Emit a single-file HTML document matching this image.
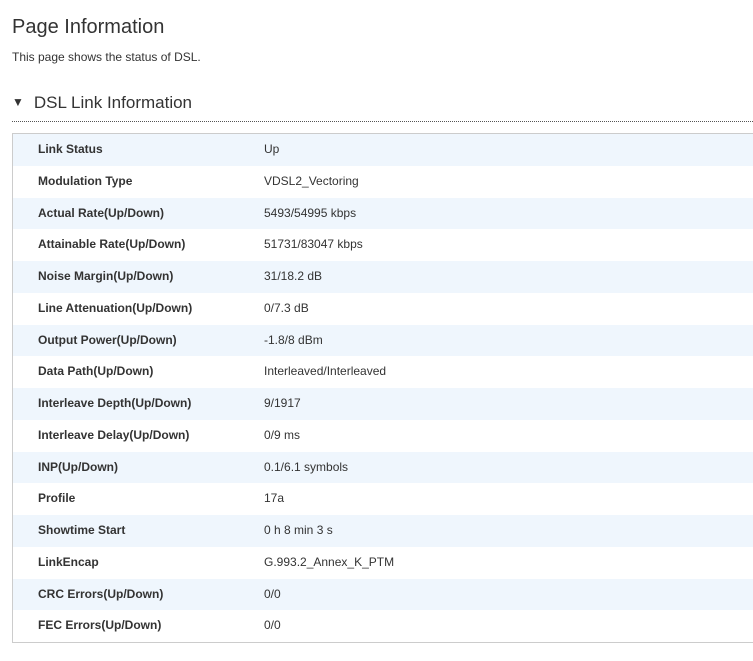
<!DOCTYPE html>
<html><head><meta charset="utf-8"><style>
body{margin:0;background:#fff;font-family:"Liberation Sans",sans-serif;color:#333;width:753px;height:661px;overflow:hidden;position:relative}
.t{position:absolute;left:12px;top:16px;font-size:20px;color:#333}
.s{position:absolute;left:12px;top:50px;font-size:12px;color:#333}
.h{position:absolute;left:12px;top:93px;font-size:17px;color:#333}
.h span{font-size:12px;margin-right:10px;position:relative;top:-2px}
.d{position:absolute;left:12px;right:0;top:121px;border-top:1px dotted #555}
.box{position:absolute;left:12px;top:133px;width:745px;height:508px;border:1px solid #ccc;border-right:none}
.r{height:31.75px;line-height:31.75px;font-size:12px;position:relative}
.r:nth-child(odd){background:#eff6fd}
.r b{position:absolute;left:25px;font-weight:bold;color:#333}
.r i{position:absolute;left:251px;font-style:normal;color:#333}
</style></head><body>
<div class="t">Page Information</div>
<div class="s">This page shows the status of DSL.</div>
<div class="h"><span>▼</span>DSL Link Information</div>
<div class="d"></div>
<div class="box">
<div class="r"><b>Link Status</b><i>Up</i></div>
<div class="r"><b>Modulation Type</b><i>VDSL2_Vectoring</i></div>
<div class="r"><b>Actual Rate(Up/Down)</b><i>5493/54995 kbps</i></div>
<div class="r"><b>Attainable Rate(Up/Down)</b><i>51731/83047 kbps</i></div>
<div class="r"><b>Noise Margin(Up/Down)</b><i>31/18.2 dB</i></div>
<div class="r"><b>Line Attenuation(Up/Down)</b><i>0/7.3 dB</i></div>
<div class="r"><b>Output Power(Up/Down)</b><i>-1.8/8 dBm</i></div>
<div class="r"><b>Data Path(Up/Down)</b><i>Interleaved/Interleaved</i></div>
<div class="r"><b>Interleave Depth(Up/Down)</b><i>9/1917</i></div>
<div class="r"><b>Interleave Delay(Up/Down)</b><i>0/9 ms</i></div>
<div class="r"><b>INP(Up/Down)</b><i>0.1/6.1 symbols</i></div>
<div class="r"><b>Profile</b><i>17a</i></div>
<div class="r"><b>Showtime Start</b><i>0 h 8 min 3 s</i></div>
<div class="r"><b>LinkEncap</b><i>G.993.2_Annex_K_PTM</i></div>
<div class="r"><b>CRC Errors(Up/Down)</b><i>0/0</i></div>
<div class="r"><b>FEC Errors(Up/Down)</b><i>0/0</i></div>
</div>
</body></html>
